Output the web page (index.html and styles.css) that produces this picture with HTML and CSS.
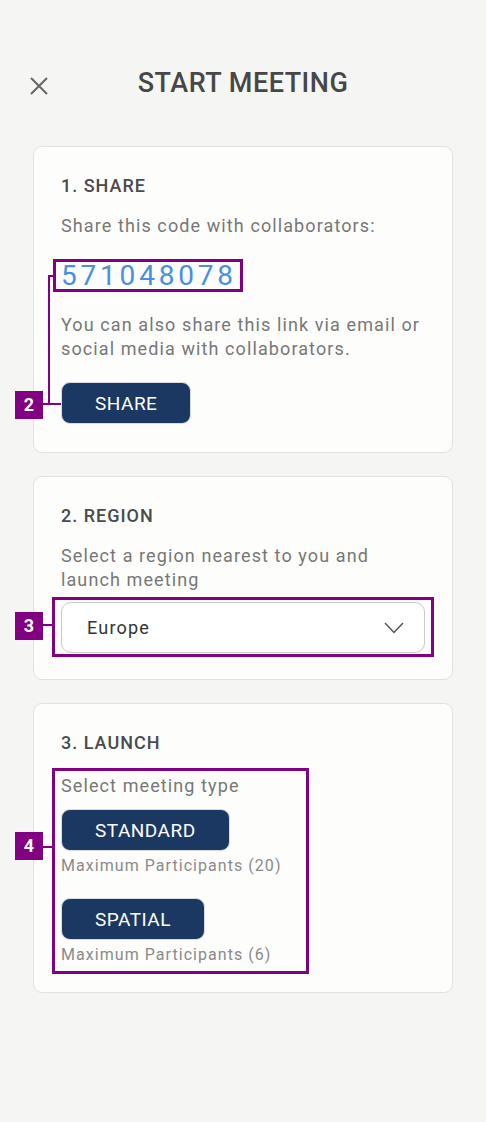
FILE: index.html
```html
<!DOCTYPE html>
<html lang="en">
<head>
<meta charset="utf-8">
<title>Start Meeting</title>
<link rel="stylesheet" href="styles.css">
</head>
<body>
<main class="page">
  <header class="topbar">
    <button class="close" aria-label="Close">
      <svg width="20" height="20" viewBox="0 0 20 20"><path d="M2 2 L18 18 M18 2 L2 18" stroke="#666" stroke-width="2" fill="none"/></svg>
    </button>
    <h1 class="title">START MEETING</h1>
    <span class="spacer"></span>
  </header>

  <section class="card card-share">
    <h2 class="card-title">1. SHARE</h2>
    <p class="text">Share this code with collaborators:</p>
    <div class="code-row"><span class="code hl-code">571048078</span></div>
    <p class="text para">You can also share this link via email or social media with collaborators.</p>
    <div class="btn-row"><button class="btn">SHARE</button></div>
    <span class="leader leader-up"></span>
    <span class="leader leader-top"></span>
    <span class="leader leader-btn"></span>
    <span class="tag tag-2">2</span>
  </section>

  <section class="card card-region">
    <h2 class="card-title">2. REGION</h2>
    <p class="text">Select a region nearest to you and launch meeting</p>
    <div class="hl-group group-select">
      <div class="select">
        <span class="select-value">Europe</span>
        <svg width="20" height="12" viewBox="0 0 20 12"><polyline points="1,1 10,10.5 19,1" stroke="#555" stroke-width="1.5" fill="none"/></svg>
      </div>
      <span class="tag tag-3">3</span>
    </div>
  </section>

  <section class="card card-launch">
    <h2 class="card-title title-launch">3. LAUNCH</h2>
    <div class="hl-group group-launch">
      <p class="text">Select meeting type</p>
      <div class="type">
        <button class="btn">STANDARD</button>
        <span class="caption">Maximum Participants (20)</span>
      </div>
      <div class="type type-second">
        <button class="btn">SPATIAL</button>
        <span class="caption">Maximum Participants (6)</span>
      </div>
      <span class="tag tag-4">4</span>
    </div>
  </section>
</main>
</body>
</html>
```
FILE: styles.css
```css
* { box-sizing: border-box; }
html, body { margin: 0; padding: 0; }
body {
  background: #f5f6f4;
  font-family: Roboto, "Noto Sans", "Liberation Sans", sans-serif;
  color: #767676;
  width: 486px;
  min-height: 1122px;
}
.page { padding: 66px 33px 60px; }

.topbar {
  display: grid;
  grid-template-columns: 1fr auto 1fr;
  align-items: start;
  margin: 0 -33px;
  padding: 0 0 0 29px;
}
.close {
  background: none;
  border: 0;
  padding: 0;
  margin-top: 10px;
  width: 20px;
  height: 20px;
  justify-self: start;
  display: block;
}
.close svg { display: block; }
.title {
  margin: 0;
  font-size: 27px;
  line-height: 34px;
  font-weight: 500;
  letter-spacing: 0.5px;
  color: #474747;
  padding-right: 29px;
}

.card {
  position: relative;
  background: #fdfefc;
  border: 1px solid #e1e2e0;
  border-radius: 9px;
  padding: 27px 27px 27px;
  margin-top: 46px;
}
.card + .card { margin-top: 23px; }
.card-share { padding-bottom: 28px; }
.card-region { padding-bottom: 26px; }

.card-title {
  margin: 0;
  font-size: 18px;
  line-height: 24px;
  font-weight: 500;
  letter-spacing: 1px;
  color: #4a4a4a;
}
.text {
  margin: 16px 0 0;
  font-size: 18px;
  line-height: 24px;
  letter-spacing: 1.1px;
  color: #777;
}
.code-row { margin-top: 21px; }
.code {
  display: inline-block;
  position: relative;
  font-size: 28px;
  line-height: 33px;
  letter-spacing: 3.8px;
  color: #4a8ee0;
}
.hl-code::after {
  content: "";
  position: absolute;
  top: 0; bottom: 0; left: -8px; right: -6px;
  border: 3px solid #820082;
}
.para { margin-top: 21px; }
.btn-row { margin-top: 21px; }

.btn {
  display: inline-flex;
  align-items: center;
  justify-content: center;
  height: 42px;
  padding: 0 33px;
  border: 1px solid #d9dde3;
  border-radius: 9px;
  background: #1b3862;
  color: #fff;
  font-family: inherit;
  font-size: 19px;
  letter-spacing: 0.5px;
}

.tag {
  position: absolute;
  width: 28px;
  height: 28px;
  background: #820082;
  color: #fff;
  font-size: 18px;
  font-weight: 700;
  line-height: 28px;
  text-align: center;
}
.tag::after {
  content: "";
  position: absolute;
  left: 28px;
  height: 2px;
  width: 9px;
  background: #820082;
}
.leader { position: absolute; background: #820082; }
.leader-up { left: 14px; top: 128px; width: 2px; height: 130px; }
.leader-top { left: 14px; top: 128px; width: 6px; height: 2px; }
.leader-btn { left: 9px; top: 256px; width: 18px; height: 2px; }
.tag-2 { left: -19px; top: 244px; }
.tag-2::after { display: none; }

.hl-group { position: relative; }
.hl-group::after {
  content: "";
  position: absolute;
  border: 3px solid #820082;
  pointer-events: none;
}
.group-select { margin-top: 10px; }
.group-select::after { top: -5px; bottom: -4px; left: -9px; right: -9px; }
.select {
  display: flex;
  align-items: center;
  justify-content: space-between;
  height: 51px;
  padding: 0 20px 0 25px;
  border: 1px solid #cacaca;
  border-radius: 10px;
  background: #fff;
}
.select svg { display: block; }
.select-value {
  font-size: 18px;
  letter-spacing: 1.2px;
  color: #333;
}
.tag-3 { left: -46px; top: 10px; }
.tag-3::after { top: 12px; }

.title-launch + .group-launch { margin-top: 19px; }
.group-launch { width: 239px; }
.group-launch > .text { margin-top: 0; }
.group-launch::after { top: -6px; bottom: -9px; left: -9px; right: -9px; }
.type {
  display: flex;
  flex-direction: column;
  align-items: flex-start;
  margin-top: 11px;
}
.type-second { margin-top: 22px; }
.caption {
  margin-top: 5px;
  font-size: 16px;
  line-height: 20px;
  letter-spacing: 1.05px;
  color: #8a8a8a;
}
.tag-4 { left: -46px; top: 58px; }
.tag-4::after { top: 14px; }
```
